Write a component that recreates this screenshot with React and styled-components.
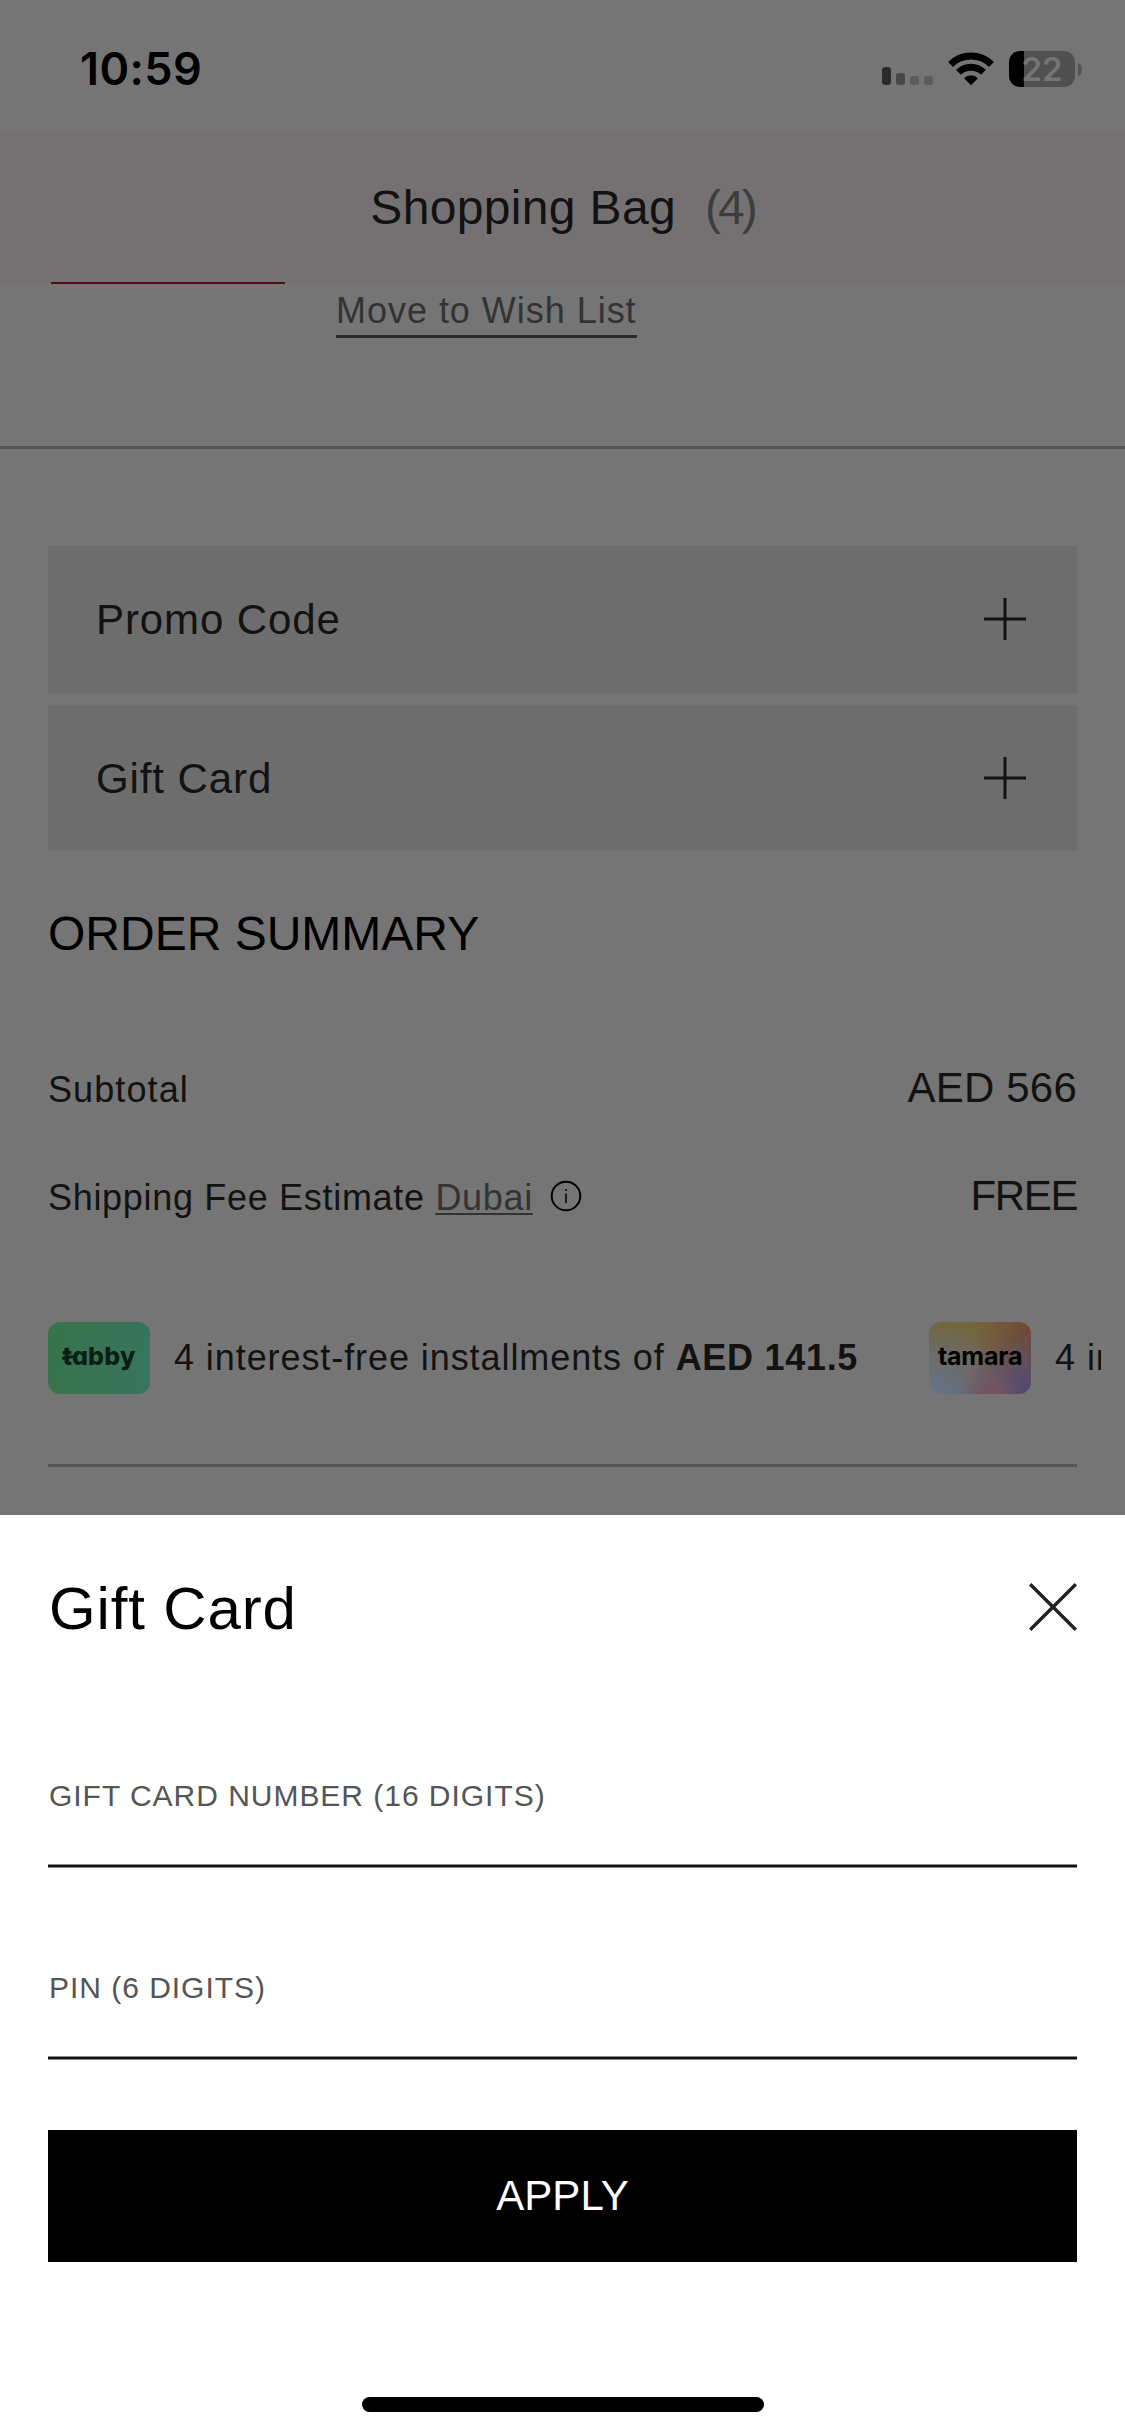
import React from "react";
import styled, { createGlobalStyle } from "styled-components";

const Global = createGlobalStyle`
  * { box-sizing: border-box; }
  body { margin: 0; background: #757575; }
  button { border: 0; padding: 0; background: none; font: inherit; color: inherit; }
`;

const Screen = styled.div`
  width: 1125px;
  height: 2436px;
  overflow: hidden;
  display: flex;
  flex-direction: column;
  background: #757575;
  color: #121212;
  font-family: "Liberation Sans", Arial, sans-serif;
`;

const StatusBar = styled.div`
  height: 132px;
  padding: 6px 43px 0 80px;
  display: flex;
  align-items: center;
  justify-content: space-between;
  font-family: Inter, sans-serif;
  color: #000;
`;

const Time = styled.span`
  font-size: 45px;
  font-weight: 600;
  line-height: 54px;
  letter-spacing: 0.4px;
`;

const StatusIcons = styled.div`
  display: flex;
  align-items: center;
`;

const Signal = styled.div`
  display: flex;
  align-items: flex-end;
  gap: 5px;
  height: 32px;
  margin-right: 15px;
`;

const Bar = styled.i`
  width: 9px;
  height: ${(p) => p.$h}px;
  border-radius: 3px;
  background: ${(p) => p.$c};
`;

const Battery = styled.div`
  display: flex;
  align-items: center;
  gap: 3px;
  margin-left: 15px;
`;

const BatteryBody = styled.div`
  width: 66px;
  height: 36px;
  border-radius: 11px;
  background: linear-gradient(to right, #000 15px, #505050 15px);
  color: #757575;
  font-size: 33px;
  font-weight: 600;
  line-height: 37px;
  text-align: center;
`;

const BatteryTip = styled.i`
  width: 4px;
  height: 13px;
  border-radius: 0 100% 100% 0 / 0 50% 50% 0;
  background: #555;
`;

const Header = styled.header`
  height: 152px;
  display: flex;
  align-items: center;
  justify-content: center;
  gap: 29px;
  background: #757172;
  font-size: 48px;
  line-height: 60px;
  letter-spacing: 0.35px;
`;

const Count = styled.span`
  color: #3d3d3d;
  letter-spacing: -3px;
`;

const BagItem = styled.div`
  height: 164px;
  margin-top: -2px;
  padding-left: 51px;
  display: flex;
  align-items: flex-start;
  gap: 51px;
`;

const ThumbEdge = styled.div`
  width: 234px;
  height: 2px;
  background: #510d0e;
`;

const WishLink = styled.a`
  margin-top: 6px;
  padding-bottom: 2px;
  border-bottom: 3px solid #2b2b2b;
  color: #333;
  font-size: 36px;
  line-height: 45px;
  letter-spacing: 0.97px;
`;

const Rule = styled.div`
  flex: none;
  height: 3px;
  margin: ${(p) => p.$m || "0"};
  background: #555;
`;

const Accordions = styled.div`
  margin: 97px 48px 0;
  display: flex;
  flex-direction: column;
  gap: 12px;
`;

const Accordion = styled.button`
  height: 146.5px;
  padding: 0 51px 0 48px;
  display: flex;
  align-items: center;
  justify-content: space-between;
  background: #6d6d6d;
  font-size: 42px;
  line-height: 50px;
  letter-spacing: 0.9px;
`;

const AccordionLabel = styled.span`
  padding-top: 2px;
`;

const SummaryTitle = styled.h2`
  margin: 53px 48px 94px;
  color: #000;
  font-size: 48px;
  font-weight: 400;
  line-height: 60px;
`;

const Rows = styled.div`
  margin: 0 48px;
  display: flex;
  flex-direction: column;
  gap: 48px;
`;

const Row = styled.div`
  height: 60px;
  display: flex;
  align-items: baseline;
  justify-content: space-between;
  line-height: 60px;
`;

const Label = styled.span`
  font-size: 36px;
  letter-spacing: ${(p) => p.$ls}px;
`;

const City = styled.a`
  color: #333;
  text-decoration: underline;
  text-decoration-thickness: 2px;
  text-underline-offset: 3px;
`;

const Info = styled.svg`
  margin-left: 17px;
  vertical-align: -2px;
`;

const Value = styled.span`
  font-size: 42px;
  letter-spacing: ${(p) => p.$ls}px;
`;

const Installments = styled.div`
  margin: 96px 24px 0 48px;
  display: flex;
  gap: 71px;
  overflow: hidden;
`;

const Plan = styled.div`
  flex: none;
  display: flex;
  align-items: center;
  gap: 24px;
  font-size: 36px;
  line-height: 48px;
  letter-spacing: 0.92px;
  white-space: nowrap;
`;

const Amount = styled.b`
  letter-spacing: 0.7px;
`;

const Badge = styled.div`
  position: relative;
  width: 102px;
  height: 72px;
  padding-bottom: 4px;
  border-radius: 12px;
  display: flex;
  align-items: center;
  justify-content: center;
  background: ${(p) => p.$bg};
  color: ${(p) => p.$fg};
  font-family: Inter, sans-serif;
  font-size: 25px;
  font-weight: ${(p) => p.$weight};
  letter-spacing: ${(p) => p.$ls}px;
  font-feature-settings: ${(p) => (p.$round ? '"cv11"' : "normal")};
`;

const CrossStroke = styled.i`
  position: absolute;
  left: 14px;
  top: 34px;
  width: 11px;
  height: 2.5px;
  background: #0b1e13;
  transform: rotate(-10deg);
`;

const Sheet = styled.section`
  flex: none;
  height: 921px;
  margin-top: 48px;
  padding: 0 48px 24px;
  display: flex;
  flex-direction: column;
  background: #fff;
`;

const SheetHead = styled.div`
  margin-top: 52px;
  height: 80px;
  display: flex;
  align-items: center;
  justify-content: space-between;
`;

const SheetTitle = styled.h1`
  margin: 3px 0 0 1px;
  color: #000;
  font-size: 60px;
  font-weight: 400;
  line-height: 74px;
  letter-spacing: 0.85px;
`;

const Field = styled.label`
  height: 90px;
  margin-top: ${(p) => p.$top}px;
  display: flex;
  flex-direction: column;
  justify-content: space-between;
  color: #555;
  font-size: 30px;
  line-height: 36px;
  letter-spacing: 0.97px;
`;

const FieldLabel = styled.span`
  padding-left: 1px;
`;

const FieldLine = styled.i`
  height: 4px;
  background: linear-gradient(#888 1px, #111 1px, #111 3px, #888 3px);
`;

const Apply = styled.button`
  height: 132px;
  margin-top: 70px;
  background: #000;
  color: #fff;
  font-size: 42px;
  line-height: 132px;
`;

const HomeBar = styled.div`
  width: 402px;
  height: 15px;
  margin: auto auto 0;
  border-radius: 8px;
  background: #000;
`;

const Wifi = () => (
  <svg width="46" height="34" viewBox="0 0 46 34">
    <g fill="none" stroke="#000" strokeWidth="7">
      <path d="M2.6 12.4A29 29 0 0 1 43.4 12.4" />
      <path d="M10.5 20.2A18 18 0 0 1 35.5 20.2" />
    </g>
    <path d="M23 33.2L16.1 26.2A9.8 9.8 0 0 1 29.9 26.2Z" fill="#000" />
  </svg>
);

const Plus = () => (
  <svg width="42" height="42" viewBox="0 0 42 42" stroke="#121212" strokeWidth="3">
    <path d="M21 0V42M0 21H42" />
  </svg>
);

const Close = () => (
  <svg width="48" height="48" viewBox="0 0 48 48" fill="none" stroke="#222" strokeWidth="3.4">
    <path d="M1.2 1.2L46.8 46.8M46.8 1.2L1.2 46.8" />
  </svg>
);

const tabbyBg = "linear-gradient(100deg, #37744b, #37755e)";
const tamaraBg =
  "radial-gradient(circle at 60% 105%, #78525a 0, rgba(120,82,90,0) 34%), radial-gradient(circle at 100% 98%, #4e466f 0, rgba(78,70,111,0) 50%), radial-gradient(circle at 0 95%, #637584 0, rgba(99,117,132,0) 62%), radial-gradient(circle at 102% 12%, #70463a 0, rgba(112,70,58,0) 48%), linear-gradient(#73653b 15%, #75604f 60%, #6d6470)";

export default function App() {
  return (
    <Screen>
      <Global />
      <StatusBar>
        <Time>10:59</Time>
        <StatusIcons>
          <Signal>
            <Bar $h={18} $c="#2b2b2b" />
            <Bar $h={12} $c="#494949" />
            <Bar $h={9} $c="#5c5c5c" />
            <Bar $h={9} $c="#5c5c5c" />
          </Signal>
          <Wifi />
          <Battery>
            <BatteryBody>22</BatteryBody>
            <BatteryTip />
          </Battery>
        </StatusIcons>
      </StatusBar>
      <Header>
        <span>Shopping Bag</span>
        <Count>(4)</Count>
      </Header>
      <BagItem>
        <ThumbEdge />
        <WishLink>Move to Wish List</WishLink>
      </BagItem>
      <Rule />
      <Accordions>
        <Accordion>
          <AccordionLabel>Promo Code</AccordionLabel>
          <Plus />
        </Accordion>
        <Accordion>
          <AccordionLabel>Gift Card</AccordionLabel>
          <Plus />
        </Accordion>
      </Accordions>
      <SummaryTitle>ORDER SUMMARY</SummaryTitle>
      <Rows>
        <Row>
          <Label $ls={1.1}>Subtotal</Label>
          <Value $ls={0.2}>AED 566</Value>
        </Row>
        <Row>
          <Label $ls={0.69}>
            Shipping Fee Estimate <City>Dubai</City>
            <Info width="32" height="32" viewBox="0 0 32 32">
              <circle cx="16" cy="16" r="14.3" fill="none" stroke="#000" strokeWidth="2" />
              <path d="M16 13.5V23M16 9V11" stroke="#000" strokeWidth="1.5" />
            </Info>
          </Label>
          <Value $ls={-1.4}>FREE</Value>
        </Row>
      </Rows>
      <Installments>
        <Plan>
          <Badge $bg={tabbyBg} $fg="#0b1e13" $weight={800} $ls={0.2} $round>
            tabby
            <CrossStroke />
          </Badge>
          <span>
            4 interest-free installments of <Amount>AED 141.5</Amount>
          </span>
        </Plan>
        <Plan>
          <Badge $bg={tamaraBg} $fg="#000" $weight={700} $ls={-0.2}>
            tamara
          </Badge>
          <span>4 interest-free</span>
        </Plan>
      </Installments>
      <Rule $m="70px 48px 0" />
      <Sheet>
        <SheetHead>
          <SheetTitle>Gift Card</SheetTitle>
          <Close />
        </SheetHead>
        <Field $top={131}>
          <FieldLabel>GIFT CARD NUMBER (16 DIGITS)</FieldLabel>
          <FieldLine />
        </Field>
        <Field $top={102}>
          <FieldLabel>PIN (6 DIGITS)</FieldLabel>
          <FieldLine />
        </Field>
        <Apply>APPLY</Apply>
        <HomeBar />
      </Sheet>
    </Screen>
  );
}
